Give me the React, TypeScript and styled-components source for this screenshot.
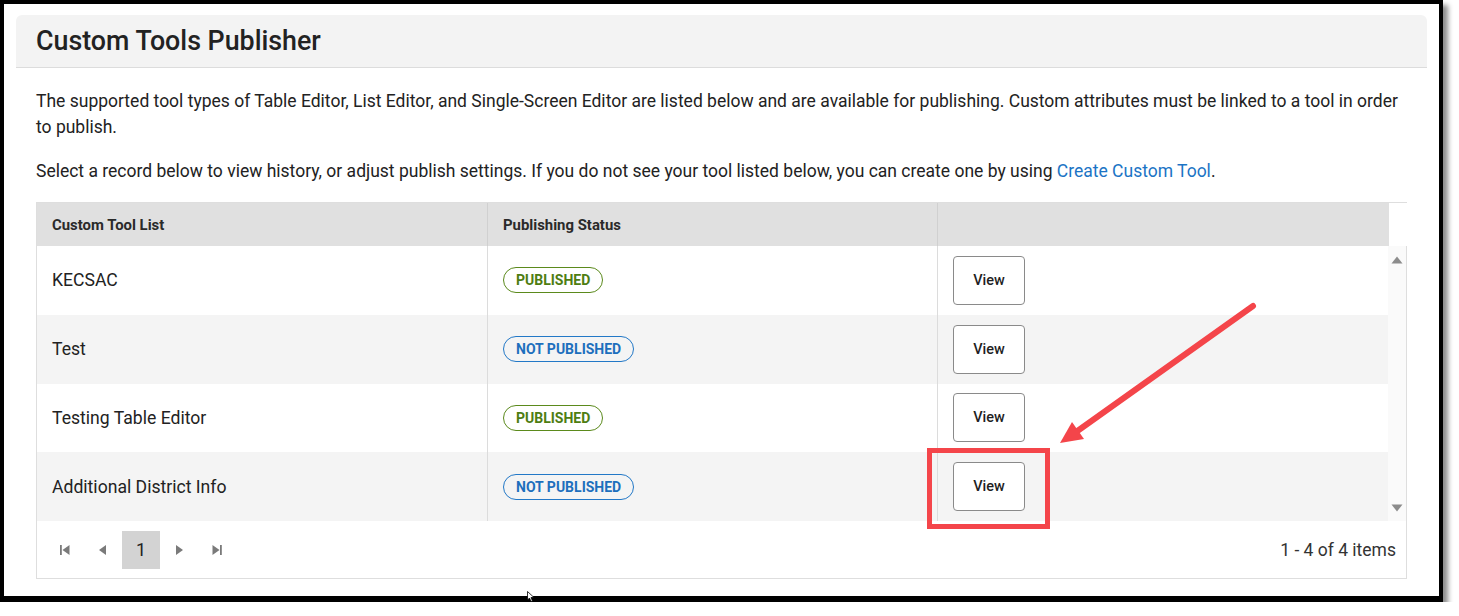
import styled, { createGlobalStyle } from "styled-components";

const GlobalStyle = createGlobalStyle`
  body {
    margin: 0;
    background: #ffffff;
    font-family: Roboto, "Liberation Sans", sans-serif;
    color: #222;
  }
`;

const Frame = styled.div`
  position: relative;
  box-sizing: border-box;
  width: 1443px;
  height: 602px;
  border: 4px solid #000;
  border-bottom-width: 6px;
  background: #fff;
  padding: 11px 12px 0 12px;
  box-shadow: 5px 5px 5px rgba(0, 0, 0, 0.45);
`;

const Panel = styled.section`
  display: flex;
  flex-direction: column;
`;

const PanelHeader = styled.header`
  display: flex;
  align-items: center;
  height: 52px;
  padding: 0 20px;
  background: #f3f3f3;
  border-radius: 6px 6px 0 0;
  border-bottom: 1px solid #dcdcdc;
`;

const Title = styled.h1`
  margin: 0;
  font-size: 26.8px;
  font-weight: 500;
  color: #222;
`;

const Content = styled.div`
  padding: 20px 20px 0 20px;
`;

const Paragraph = styled.p`
  margin: 0 0 18px 0;
  font-size: 17.5px;
  line-height: 26px;
  color: #222;
`;

const Link = styled.a`
  color: #1b74c5;
  text-decoration: none;
`;

const Table = styled.div`
  display: flex;
  flex-direction: column;
  margin-top: 15px;
  border: 1px solid #dedede;
`;

const HeaderRow = styled.div`
  display: grid;
  grid-template-columns: 450px 450px 452px 1fr;
  height: 43px;
`;

const HeaderCell = styled.div<{ $blank?: boolean; $divider?: boolean }>`
  display: flex;
  align-items: center;
  padding: 0 15px;
  background: ${(p) => (p.$blank ? "#fff" : "#e0e0e0")};
  border-left: ${(p) => (p.$divider ? "1px solid #d0d0d0" : "none")};
  font-size: 14.9px;
  font-weight: 700;
  color: #2a2a2a;
`;

const BodyWrap = styled.div`
  display: flex;
`;

const Rows = styled.div`
  flex: 1;
  display: flex;
  flex-direction: column;
`;

const Row = styled.div<{ $alt?: boolean }>`
  display: grid;
  grid-template-columns: 450px 450px 1fr;
  height: 68.75px;
  background: ${(p) => (p.$alt ? "#f4f4f4" : "#fff")};
`;

const Cell = styled.div<{ $divider?: boolean }>`
  display: flex;
  align-items: center;
  padding: 0 15px;
  border-left: ${(p) => (p.$divider ? "1px solid #dcdcdc" : "none")};
  font-size: 17.6px;
  color: #222;
`;

const Badge = styled.span<{ $status: "published" | "not" }>`
  display: inline-flex;
  align-items: center;
  height: 24px;
  padding: 0 12px;
  border-radius: 13px;
  border: 1.5px solid
    ${(p) => (p.$status === "published" ? "#5b8a1c" : "#2278c7")};
  color: ${(p) => (p.$status === "published" ? "#4e7d12" : "#1d6fbd")};
  font-size: 14px;
  font-weight: 700;
`;

const ViewButton = styled.button`
  width: 72px;
  height: 49px;
  border: 1px solid #8a8a8a;
  border-radius: 4px;
  background: #fff;
  font-family: Roboto, "Liberation Sans", sans-serif;
  font-size: 14.5px;
  font-weight: 500;
  color: #1f1f1f;
`;

const ScrollBar = styled.div`
  width: 18px;
  background: #fafafa;
  display: flex;
  flex-direction: column;
  justify-content: space-between;
  align-items: center;
  padding: 10px 0 9px;
`;

const Footer = styled.div`
  display: flex;
  align-items: center;
  justify-content: space-between;
  height: 57px;
  padding: 0 10px 0 9px;
`;

const Pager = styled.div`
  display: flex;
  align-items: center;
`;

const PagerIcon = styled.span`
  display: flex;
  align-items: center;
  justify-content: center;
  width: 38px;
  height: 38px;
`;

const PageNumber = styled.span`
  display: flex;
  align-items: center;
  justify-content: center;
  width: 38px;
  height: 38px;
  background: #d3d3d3;
  font-size: 18px;
  color: #222;
`;

const ItemsInfo = styled.span`
  font-size: 17.5px;
  color: #333;
`;

const Highlight = styled.div`
  position: absolute;
  left: 923px;
  top: 444px;
  width: 123px;
  height: 81px;
  box-sizing: border-box;
  border: 5px solid #f4454a;
`;

const ArrowSvg = styled.svg`
  position: absolute;
  left: -4px;
  top: -4px;
  pointer-events: none;
`;

const Cursor = styled.svg`
  position: absolute;
  left: 523px;
  top: 587px;
`;

const Triangle = ({ dir }: { dir: "up" | "down" }) => (
  <svg width="12" height="8" viewBox="0 0 12 8">
    <path
      d={dir === "up" ? "M6 0.5 L11.5 7.5 L0.5 7.5 Z" : "M0.5 0.5 L11.5 0.5 L6 7.5 Z"}
      fill="#8c8c8c"
      strokeLinejoin="round"
    />
  </svg>
);

// pager glyphs: triangle with optional end bar
const PageArrow = ({ kind }: { kind: "first" | "prev" | "next" | "last" }) => {
  const left = kind === "first" || kind === "prev";
  const bar = kind === "first" || kind === "last";
  return (
    <svg width="12" height="12" viewBox="0 0 12 12">
      {left ? (
        <path d={bar ? "M10.5 1 L3.5 6 L10.5 11 Z" : "M9 1 L2 6 L9 11 Z"} fill="#7a7a7a" />
      ) : (
        <path d={bar ? "M1.5 1 L8.5 6 L1.5 11 Z" : "M3 1 L10 6 L3 11 Z"} fill="#7a7a7a" />
      )}
      {bar && <rect x={left ? 1 : 9} y="1" width="1.8" height="10" fill="#7a7a7a" />}
    </svg>
  );
};

const tools = [
  { name: "KECSAC", status: "published" as const },
  { name: "Test", status: "not" as const },
  { name: "Testing Table Editor", status: "published" as const },
  { name: "Additional District Info", status: "not" as const },
];

export default function App() {
  return (
    <>
      <GlobalStyle />
      <Frame>
        <Panel>
          <PanelHeader>
            <Title>Custom Tools Publisher</Title>
          </PanelHeader>
          <Content>
            <Paragraph>
              The supported tool types of Table Editor, List Editor, and Single-Screen Editor are
              listed below and are available for publishing. Custom attributes must be linked to a
              tool in order to publish.
            </Paragraph>
            <Paragraph>
              Select a record below to view history, or adjust publish settings. If you do not see
              your tool listed below, you can create one by using{" "}
              <Link href="#">Create Custom Tool</Link>.
            </Paragraph>
            <Table>
              <HeaderRow>
                <HeaderCell>Custom Tool List</HeaderCell>
                <HeaderCell $divider>Publishing Status</HeaderCell>
                <HeaderCell $divider />
                <HeaderCell $blank />
              </HeaderRow>
              <BodyWrap>
                <Rows>
                  {tools.map((t, i) => (
                    <Row key={t.name} $alt={i % 2 === 1}>
                      <Cell>{t.name}</Cell>
                      <Cell $divider>
                        <Badge $status={t.status}>
                          {t.status === "published" ? "PUBLISHED" : "NOT PUBLISHED"}
                        </Badge>
                      </Cell>
                      <Cell $divider>
                        <ViewButton>View</ViewButton>
                      </Cell>
                    </Row>
                  ))}
                </Rows>
                <ScrollBar>
                  <Triangle dir="up" />
                  <Triangle dir="down" />
                </ScrollBar>
              </BodyWrap>
              <Footer>
                <Pager>
                  <PagerIcon>
                    <PageArrow kind="first" />
                  </PagerIcon>
                  <PagerIcon>
                    <PageArrow kind="prev" />
                  </PagerIcon>
                  <PageNumber>1</PageNumber>
                  <PagerIcon>
                    <PageArrow kind="next" />
                  </PagerIcon>
                  <PagerIcon>
                    <PageArrow kind="last" />
                  </PagerIcon>
                </Pager>
                <ItemsInfo>1 - 4 of 4 items</ItemsInfo>
              </Footer>
            </Table>
          </Content>
        </Panel>
        <Highlight />
        <ArrowSvg width="1459" height="616" viewBox="0 0 1459 616">
          <line
            x1="1253"
            y1="306"
            x2="1076"
            y2="432"
            stroke="#f4454a"
            strokeWidth="6"
            strokeLinecap="round"
          />
          <polygon points="1060,443 1072,422 1084,439" fill="#f4454a" />
        </ArrowSvg>
        <Cursor width="8" height="12" viewBox="0 0 8 12">
          <path
            d="M0.5 0.5 L0.5 9 L2.5 7 L4 10.5 L5.5 10 L4 6.5 L7 6.5 Z"
            fill="#fff"
            stroke="#000"
            strokeWidth="0.8"
          />
        </Cursor>
      </Frame>
    </>
  );
}
